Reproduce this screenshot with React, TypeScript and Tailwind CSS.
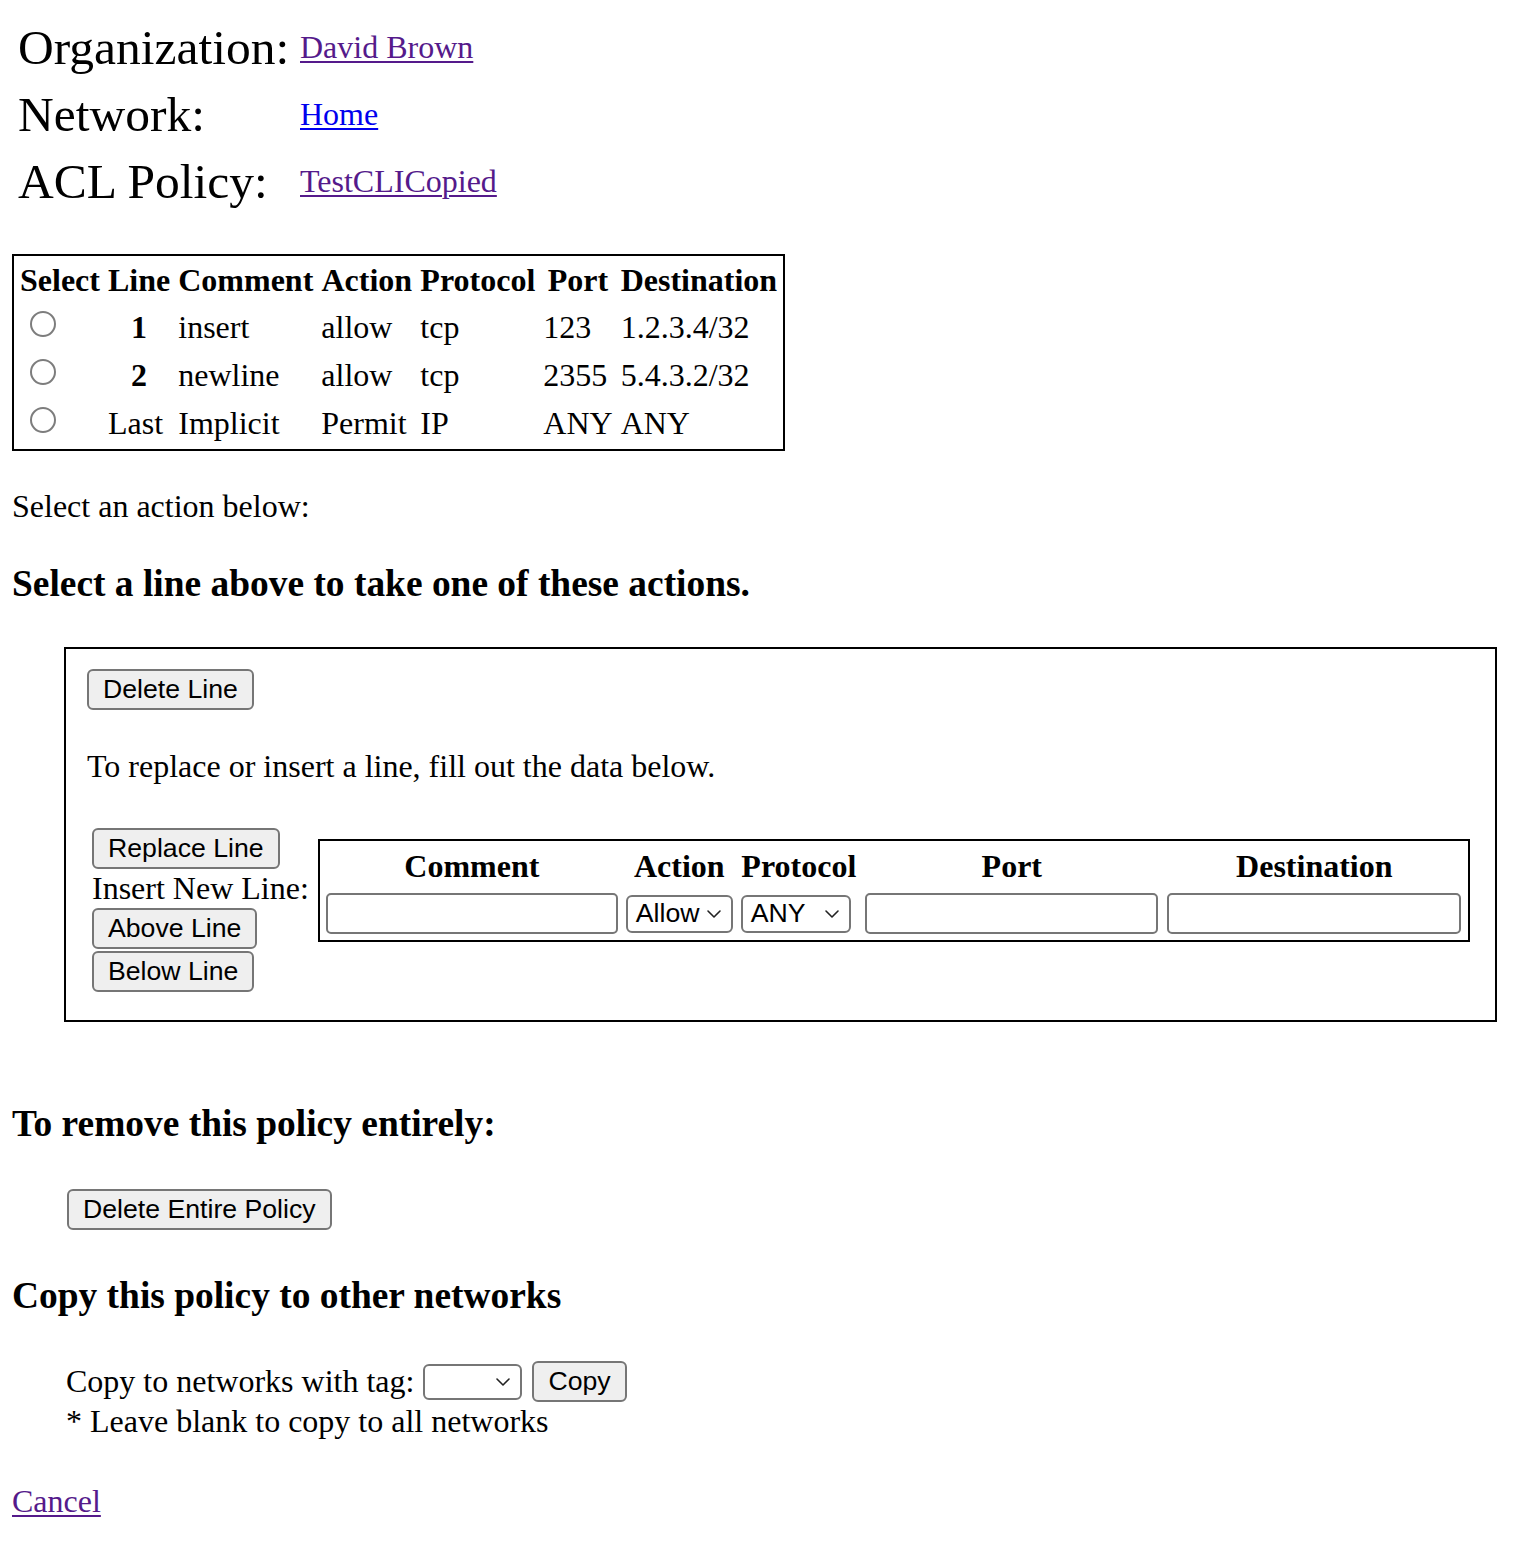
import React from "react";

const rows = [
  { line: "1", head: true, comment: "insert", action: "allow", proto: "tcp", port: "123", dest: "1.2.3.4/32" },
  { line: "2", head: true, comment: "newline", action: "allow", proto: "tcp", port: "2355", dest: "5.4.3.2/32" },
  { line: "Last", head: false, comment: "Implicit", action: "Permit", proto: "IP", port: "ANY", dest: "ANY" },
];

function Btn({ children, className = "" }: { children: React.ReactNode; className?: string }) {
  return (
    <button
      type="button"
      className={`h-[41px] px-[14px] bg-[#efefef] border-2 border-[#767676] rounded-[6px] font-['Liberation_Sans',Arial,sans-serif] text-[26.67px] leading-none text-black whitespace-nowrap ${className}`}
    >
      {children}
    </button>
  );
}

function Chevron() {
  return (
    <svg width="16" height="10" viewBox="0 0 16 10" fill="none" className="shrink-0">
      <path d="M2 2l6 6 6-6" stroke="#222" strokeWidth="1.6" strokeLinecap="round" strokeLinejoin="round" />
    </svg>
  );
}

function FakeSelect({ value, className = "" }: { value: string; className?: string }) {
  return (
    <div
      className={`flex items-center justify-between border-2 border-[#767676] rounded-[6px] bg-white pl-[8px] pr-[9px] font-['Liberation_Sans',Arial,sans-serif] text-[26.67px] leading-none text-black ${className}`}
    >
      <span>{value}</span>
      <Chevron />
    </div>
  );
}

function TextBox({ className = "" }: { className?: string }) {
  return <div className={`h-[41px] border-2 border-[#767676] rounded-[5px] bg-white ${className}`} />;
}

export default function App() {
  return (
    <div className="min-h-[1548px] bg-white px-[12px] pb-[20px] font-['Liberation_Serif','Times_New_Roman',serif] text-[32px] leading-[37px] text-black">
      {/* Header */}
      <div className="pt-[14px] pl-[6px] grid grid-cols-[282px_auto]">
        <div className="h-[67px] flex items-center text-[49.5px] leading-[56px]">Organization:</div>
        <div className="h-[67px] flex items-center">
          <a href="#" className="text-[#551a8b] underline decoration-2 underline-offset-[3px]">David Brown</a>
        </div>
        <div className="h-[67px] flex items-center text-[49.5px] leading-[56px]">Network:</div>
        <div className="h-[67px] flex items-center">
          <a href="#" className="text-[#0000ee] underline decoration-2 underline-offset-[3px]">Home</a>
        </div>
        <div className="h-[67px] flex items-center text-[49.5px] leading-[56px]">ACL Policy:</div>
        <div className="h-[67px] flex items-center">
          <a href="#" className="text-[#551a8b] underline decoration-2 underline-offset-[3px]">TestCLICopied</a>
        </div>
      </div>

      {/* Rule table */}
      <table className="mt-[39px] border-2 border-black border-separate border-spacing-[4px]">
        <thead>
          <tr>
            <th className="h-[41px] w-[84px] p-[2px] font-bold text-center">Select</th>
            <th className="h-[41px] w-[66px] p-[2px] font-bold text-center">Line</th>
            <th className="h-[41px] w-[139px] p-[2px] font-bold text-center">Comment</th>
            <th className="h-[41px] w-[95px] p-[2px] font-bold text-center">Action</th>
            <th className="h-[41px] w-[119px] p-[2px] font-bold text-center">Protocol</th>
            <th className="h-[41px] w-[73px] p-[2px] font-bold text-center">Port</th>
            <th className="h-[41px] w-[160px] p-[2px] font-bold text-center">Destination</th>
          </tr>
        </thead>
        <tbody>
          {rows.map((r) => (
            <tr key={r.line}>
              <td className="h-[44px] p-[2px]">
                <div className="ml-[10px] mb-[6px] h-[26px] w-[26px] rounded-full border-2 border-[#7d7d7d] bg-white" />
              </td>
              {r.head ? (
                <th className="h-[44px] p-[2px] font-bold text-center">{r.line}</th>
              ) : (
                <td className="h-[44px] p-[2px] text-left">{r.line}</td>
              )}
              <td className="h-[44px] p-[2px] text-left">{r.comment}</td>
              <td className="h-[44px] p-[2px] text-left">{r.action}</td>
              <td className="h-[44px] p-[2px] text-left">{r.proto}</td>
              <td className="h-[44px] p-[2px] text-left">{r.port}</td>
              <td className="h-[44px] p-[2px] text-left">{r.dest}</td>
            </tr>
          ))}
        </tbody>
      </table>

      <p className="mt-[37px]">Select an action below:</p>
      <h3 className="mt-[37px] text-[37.44px] leading-[43px] font-bold">Select a line above to take one of these actions.</h3>

      {/* Action box */}
      <div className="mt-[42px] ml-[52px] w-[1433px] border-2 border-black pt-[20px] pl-[21px] pb-[28px]">
        <Btn>Delete Line</Btn>
        <p className="mt-[38px]">To replace or insert a line, fill out the data below.</p>

        <div className="mt-[43px] ml-[5px] flex items-start">
          <div className="flex flex-col items-start">
            <Btn>Replace Line</Btn>
            <div className="leading-[39px] whitespace-nowrap">Insert New Line:</div>
            <Btn>Above Line</Btn>
            <Btn className="mt-[2px]">Below Line</Btn>
          </div>

          <table className="ml-[9px] mt-[11px] border-2 border-black border-separate border-spacing-[4px]">
            <thead>
              <tr>
                <th className="h-[42px] w-[296px] p-[2px] font-bold text-center">Comment</th>
                <th className="h-[42px] w-[111px] p-[2px] font-bold text-center">Action</th>
                <th className="h-[42px] w-[120px] p-[2px] font-bold text-center">Protocol</th>
                <th className="h-[42px] w-[298px] p-[2px] font-bold text-center">Port</th>
                <th className="h-[42px] w-[299px] p-[2px] font-bold text-center">Destination</th>
              </tr>
            </thead>
            <tbody>
              <tr>
                <td className="h-[45px] p-[2px]">
                  <TextBox className="w-[292px]" />
                </td>
                <td className="h-[45px] p-[2px]">
                  <FakeSelect value="Allow" className="h-[38px] w-[107px]" />
                </td>
                <td className="h-[45px] p-[2px]">
                  <FakeSelect value="ANY" className="h-[38px] w-[110px]" />
                </td>
                <td className="h-[45px] p-[2px]">
                  <TextBox className="w-[293px]" />
                </td>
                <td className="h-[45px] p-[2px]">
                  <TextBox className="w-[294px]" />
                </td>
              </tr>
            </tbody>
          </table>
        </div>
      </div>

      <h3 className="mt-[80px] text-[37.44px] leading-[43px] font-bold">To remove this policy entirely:</h3>
      <Btn className="mt-[44px] ml-[55px]">Delete Entire Policy</Btn>

      <h3 className="mt-[44px] text-[37.44px] leading-[43px] font-bold">Copy this policy to other networks</h3>

      <div className="mt-[44px] ml-[54px]">
        <div className="h-[41px] flex items-center">
          <span className="whitespace-nowrap">Copy to networks with tag:</span>
          <FakeSelect value="" className="ml-[9px] h-[36px] w-[99px]" />
          <Btn className="ml-[10px]">Copy</Btn>
        </div>
        <p className="mt-[1px]">* Leave blank to copy to all networks</p>
      </div>

      <a href="#" className="mt-[43px] inline-block text-[#551a8b] underline decoration-2 underline-offset-[3px]">
        Cancel
      </a>
    </div>
  );
}
